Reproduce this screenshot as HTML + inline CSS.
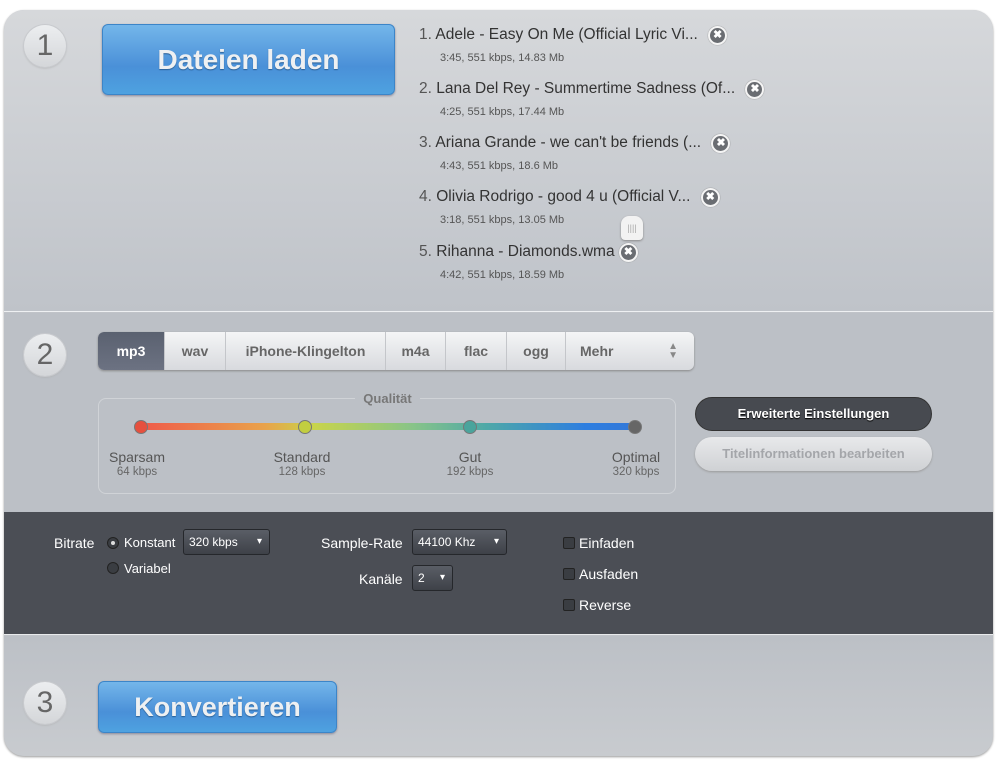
<!DOCTYPE html>
<html><head><meta charset="utf-8"><style>
*{margin:0;padding:0;box-sizing:border-box}
body{width:999px;height:761px;background:#fff;position:relative;font-family:"Liberation Sans",sans-serif;overflow:hidden}
.panel{position:absolute;left:4px;top:10px;width:989px;height:746px;border-radius:20px;background:#c0c3c8;overflow:hidden;box-shadow:0 1px 2px #999}
.s1{position:absolute;left:0;top:0;width:989px;height:302px;background:linear-gradient(#d6d8db,#bfc3c9);border-bottom:1px solid #eef0f2}
.s2{position:absolute;left:0;top:303px;width:989px;height:199px;background:#bcc0c6}
.s3d{position:absolute;left:0;top:502px;width:989px;height:123px;background:#4b4e55;border-bottom:1px solid #e8eaec}
.s3{position:absolute;left:0;top:626px;width:989px;height:120px;background:linear-gradient(#bcc0c6,#c8cbcf)}
.num{position:absolute;width:42px;height:42px;border-radius:50%;background:linear-gradient(#eceef0,#d4d6d9);box-shadow:0 0 0 1px #c8cace,0 1px 2px #aaa;color:#666;font:30px "Liberation Sans",sans-serif;text-align:center;line-height:42px}
.btn{position:absolute;border-radius:6px;background:linear-gradient(#74b6ea,#4a90d8 60%,#4ea2e0);border:1px solid #3c85c8;color:#eef0f2;font-weight:bold;text-align:center;text-shadow:0 1px 1px #2a5f95;box-shadow:0 1px 2px #889}
.tr{position:absolute;left:419px;font-size:15.5px;color:#333;white-space:nowrap}
.tr .n{color:#555}
.tr .sub{display:block;font-size:11px;color:#555;margin:7px 0 0 21px}
.x{display:inline-block;width:19px;height:19px;border-radius:50%;background:#6a6d72;border:2px solid #f4f4f4;color:#fff;font-size:11px;font-weight:bold;text-align:center;line-height:15px;vertical-align:1px;margin-left:6px;box-shadow:0 0 1px #666}
.tabs{position:absolute;left:98px;top:332px;width:596px;height:38px;border-radius:6px;background:linear-gradient(#f4f5f6,#d8dade);box-shadow:0 1px 2px #888;display:flex;overflow:hidden;font:bold 14px "Liberation Sans",sans-serif;color:#666}
.tabs div{border-right:1px solid #c4c6ca;text-align:center;line-height:38px}
.qbox{position:absolute;left:98px;top:398px;width:578px;height:96px;border:1px solid #d0d3d7;border-radius:8px}
.lbl{position:absolute;text-align:center;color:#555;font-size:14px}
.lbl small{display:block;font-size:11.5px;color:#666;margin-top:1px}
.dot{position:absolute;width:14px;height:14px;border-radius:50%;top:420px;border:1px solid #777}
.rb{position:absolute;left:695px;width:237px;height:34px;border-radius:17px;text-align:center;font:bold 13px "Liberation Sans",sans-serif;line-height:32px}
.w{color:#fff;font-size:14px;position:absolute}
.sel{position:absolute;height:26px;border-radius:3px;background:linear-gradient(#5a5e66,#3e4148);border:1px solid #25272b;color:#fff;font:12px "Liberation Sans",sans-serif;line-height:24px;padding-left:5px}
.sel:after{content:"▾";position:absolute;right:7px;font-size:10px}
.cb{position:absolute;width:12px;height:12px;border-radius:2px;background:#3a3d42;border:1px solid #222;left:563px}
.rad{position:absolute;left:107px;width:12px;height:12px;border-radius:50%;background:#3a3d42;border:1px solid #222}
</style></head><body>
<div class="panel">
<div class="s1"></div><div class="s2"></div><div class="s3d"></div><div class="s3"></div>
</div>
<div class="num" style="left:24px;top:25px">1</div>
<div class="btn" style="left:102px;top:24px;width:293px;height:71px;font-size:28px;line-height:69px">Dateien laden</div>
<div class="tr" style="top:26px"><span class="n">1.</span> Adele - Easy On Me (Official Lyric Vi... <span class="x">✖</span><span class="sub">3:45, 551 kbps, 14.83 Mb</span></div>
<div class="tr" style="top:80px"><span class="n">2.</span> Lana Del Rey - Summertime Sadness (Of... <span class="x">✖</span><span class="sub">4:25, 551 kbps, 17.44 Mb</span></div>
<div class="tr" style="top:134px"><span class="n">3.</span> Ariana Grande - we can't be friends (... <span class="x">✖</span><span class="sub">4:43, 551 kbps, 18.6 Mb</span></div>
<div class="tr" style="top:188px"><span class="n">4.</span> Olivia Rodrigo - good 4 u (Official V... <span class="x">✖</span><span class="sub">3:18, 551 kbps, 13.05 Mb</span></div>
<div class="tr" style="top:243px"><span class="n">5.</span> Rihanna - Diamonds.wma <span class="x" style="margin-left:0">✖</span><span class="sub">4:42, 551 kbps, 18.59 Mb</span></div>
<div style="position:absolute;left:621px;top:216px;width:22px;height:24px;border-radius:8px 8px 4px 4px;background:#f2f2f2;box-shadow:0 1px 2px #888;color:#aaa;font-size:9px;text-align:center;line-height:24px">||||</div>

<div class="num" style="left:24px;top:334px">2</div>
<div class="tabs">
<div style="width:67px;background:linear-gradient(#5a6170,#6c7282);color:#fff">mp3</div>
<div style="width:61px">wav</div>
<div style="width:160px">iPhone-Klingelton</div>
<div style="width:60px">m4a</div>
<div style="width:61px">flac</div>
<div style="width:59px">ogg</div>
<div style="flex:1;border:none;text-align:left;padding-left:14px;position:relative">Mehr<span style="position:absolute;right:16px;font-size:10px;line-height:9px;top:10px;color:#888">▲<br>▼</span></div>
</div>
<div class="qbox"></div>
<div class="lbl" style="left:355px;top:391px;width:65px;background:#bcc0c6;font-weight:bold;font-size:13px;color:#777">Qualität</div>
<div style="position:absolute;left:141px;top:423px;width:494px;height:7px;border-radius:3px;background:linear-gradient(90deg,#ef5a4a,#e9a24a 25%,#c8d44a 35%,#88c488 55%,#4ea8a8 70%,#2e7ee0 90%,#3378d8)"></div>
<div class="dot" style="left:134px;background:#e6503e"></div>
<div class="dot" style="left:298px;background:#c2ce40"></div>
<div class="dot" style="left:463px;background:#4aa49c"></div>
<div class="dot" style="left:628px;background:#666"></div>
<div class="lbl" style="left:100px;top:449px;width:74px">Sparsam<small>64 kbps</small></div>
<div class="lbl" style="left:264px;top:449px;width:76px">Standard<small>128 kbps</small></div>
<div class="lbl" style="left:432px;top:449px;width:76px">Gut<small>192 kbps</small></div>
<div class="lbl" style="left:599px;top:449px;width:74px">Optimal<small>320 kbps</small></div>
<div class="rb" style="top:397px;background:#474a50;color:#fff;border:1px solid #333;text-shadow:0 1px 1px #000">Erweiterte Einstellungen</div>
<div class="rb" style="top:437px;background:linear-gradient(#e8e9eb,#cfd1d4);color:#a4a6aa;box-shadow:0 1px 2px #999;line-height:34px">Titelinformationen bearbeiten</div>

<div class="w" style="left:54px;top:535px">Bitrate</div>
<div class="rad" style="top:537px"><div style="width:4px;height:4px;border-radius:50%;background:#ddd;margin:3px"></div></div>
<div class="w" style="left:124px;top:535px;font-size:13px">Konstant</div>
<div class="rad" style="top:562px"></div>
<div class="w" style="left:124px;top:561px;font-size:13px">Variabel</div>
<div class="sel" style="left:183px;top:529px;width:87px">320 kbps</div>
<div class="w" style="left:321px;top:535px">Sample-Rate</div>
<div class="sel" style="left:412px;top:529px;width:95px">44100 Khz</div>
<div class="w" style="left:359px;top:571px">Kanäle</div>
<div class="sel" style="left:412px;top:565px;width:41px">2</div>
<div class="cb" style="top:537px"></div><div class="w" style="left:579px;top:535px">Einfaden</div>
<div class="cb" style="top:568px"></div><div class="w" style="left:579px;top:566px">Ausfaden</div>
<div class="cb" style="top:599px"></div><div class="w" style="left:579px;top:597px">Reverse</div>

<div class="num" style="left:24px;top:682px">3</div>
<div class="btn" style="left:98px;top:681px;width:239px;height:52px;font-size:27px;line-height:50px">Konvertieren</div>
</body></html>
